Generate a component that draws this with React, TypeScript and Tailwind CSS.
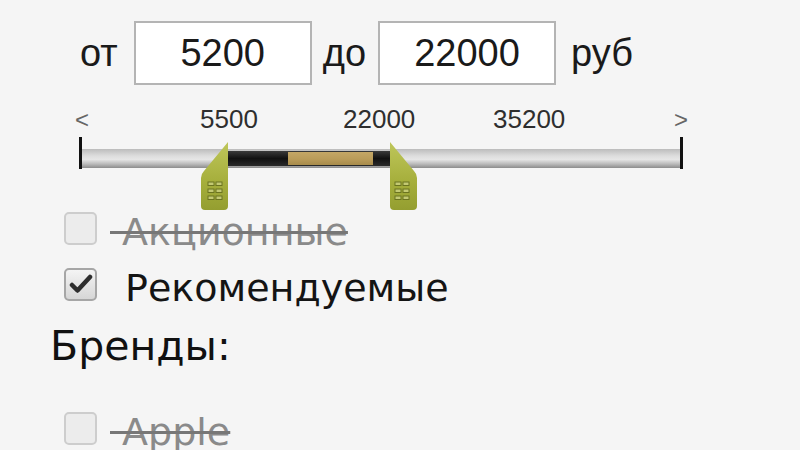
import React from "react";

const sans = "font-['Liberation_Sans',Arial,sans-serif]";
const tahoma = "font-['DejaVu_Sans',Verdana,sans-serif]";

function Handle({ side }: { side: "left" | "right" }) {
    const path =
        side === "left"
            ? "M28 0 L28 64 Q28 68 24 68 L5 68 Q1 68 1 64 L1 36 Q1 32 4 29 Z"
            : "M0 0 L0 64 Q0 68 4 68 L23 68 Q27 68 27 64 L27 36 Q27 32 24 29 Z";
    const dx = side === "left" ? 8 : 5;
    const id = `hg-${side}`;
    return (
        <svg width="28" height="68" viewBox="0 0 28 68">
            <defs>
                <linearGradient id={id} x1="0" y1="0" x2="0" y2="1">
                    <stop offset="0" stopColor="#bec65a" />
                    <stop offset="0.6" stopColor="#a5ae3b" />
                    <stop offset="1" stopColor="#949e30" />
                </linearGradient>
            </defs>
            <path d={path} fill={`url(#${id})`} />
            {[0, 1, 2].map((r) =>
                [0, 1].map((c) => (
                    <rect
                        key={`${r}-${c}`}
                        x={dx + c * 8}
                        y={40 + r * 7}
                        width="6"
                        height="3.5"
                        fill="#c3c972"
                        stroke="#6b7420"
                        strokeWidth="1"
                    />
                ))
            )}
        </svg>
    );
}

export default function App() {
    return (
        <div className="w-[800px] h-[450px] overflow-hidden bg-[#f5f5f5] pt-[21px]">
            <div className={`flex h-[64px] items-center pl-[80px] text-[38px] text-[#1a1a1a] ${sans}`}>
                <span className="leading-none">от</span>
                <div className="ml-[16px] flex h-[64px] w-[178px] items-center justify-center border-2 border-[#b4b4b4] bg-white">
                    5200
                </div>
                <span className="ml-[11px] leading-none">до</span>
                <div className="ml-[12px] flex h-[64px] w-[178px] items-center justify-center border-2 border-[#b4b4b4] bg-white">
                    22000
                </div>
                <span className="ml-[15px] leading-none">руб</span>
            </div>

            <div className="relative ml-[79px] mt-[22px] h-[93px] w-[604px]">
                <div className={`relative h-[24px] text-[26px] leading-[24px] text-[#2e2e2e] ${sans}`}>
                    <span className="absolute left-[-4px] top-[1px] text-[24px] text-[#666]">&lt;</span>
                    <span className="absolute left-[121px] top-0">5500</span>
                    <span className="absolute left-[264px] top-0">22000</span>
                    <span className="absolute left-[414px] top-0">35200</span>
                    <span className="absolute left-[595px] top-[1px] text-[24px] text-[#666]">&gt;</span>
                </div>
                <div className="mt-[6px] flex h-[32px] items-center">
                    <div className="h-[32px] w-[3px] bg-[#111]" />
                    <div className="relative mb-[1px] h-[19px] flex-1 self-end bg-[linear-gradient(#bcbcbc_0%,#dcdcdc_35%,#e6e6e6_55%,#b8b8b8_80%,#8c8c8c_100%)]">
                        <div className="absolute left-[146px] top-[2px] h-[15px] w-[162px] bg-[linear-gradient(#3a3a3a,#111_50%,#2a2a2a)]" />
                        <div className="absolute left-[206px] top-[3px] h-[13px] w-[85px] bg-[linear-gradient(#c4a766,#b89a58_60%,#a88c4c)]" />
                    </div>
                    <div className="h-[32px] w-[3px] bg-[#111]" />
                </div>
                <div className="absolute left-[121px] top-[35px]">
                    <Handle side="left" />
                </div>
                <div className="absolute left-[311px] top-[35px]">
                    <Handle side="right" />
                </div>
            </div>

            <div className={`${tahoma}`}>
                <div className="flex h-[56px] items-center pl-[64px]">
                    <div className="h-[33px] w-[33px] shrink-0 rounded-[5px] border-2 border-[#cdcdcd] bg-[#ececec]" />
                    <span className="ml-[13px] mt-[8px] text-[38px] leading-none text-[#8a8a8a] line-through decoration-[#777]">
                        &nbsp;Акционные
                    </span>
                </div>
                <div className="flex h-[56px] items-center pl-[64px]">
                    <div className="flex h-[33px] w-[33px] shrink-0 items-center justify-center rounded-[5px] border-2 border-[#a6a6a6] bg-[linear-gradient(#f4f4f4,#d6d6d6)]">
                        <svg width="24" height="22" viewBox="0 0 24 22">
                            <path d="M3 12 L8.5 17.5 L21 4" fill="none" stroke="#2e2e2e" strokeWidth="4.5" strokeLinecap="round" strokeLinejoin="round" />
                        </svg>
                    </div>
                    <span className="ml-[28px] mt-[8px] text-[38px] leading-none text-[#141414]">Рекомендуемые</span>
                </div>
                <div className="flex h-[68px] items-center pl-[50px] text-[41px] leading-none text-[#111]">Бренды:</div>
                <div className="mt-[20px] flex h-[56px] items-center pl-[64px]">
                    <div className="h-[33px] w-[33px] shrink-0 rounded-[5px] border-2 border-[#cdcdcd] bg-[#ececec]" />
                    <span className="ml-[13px] mt-[8px] text-[38px] leading-none text-[#8a8a8a] line-through decoration-[#777]">
                        &nbsp;Apple
                    </span>
                </div>
            </div>
        </div>
    );
}
